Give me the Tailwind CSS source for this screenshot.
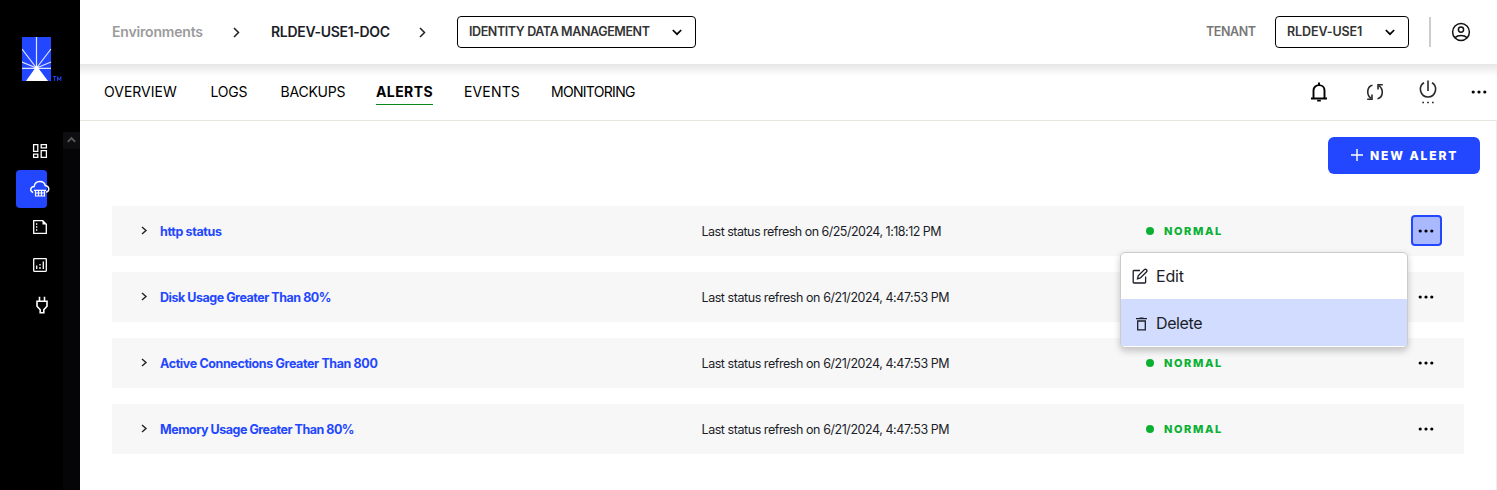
<!DOCTYPE html>
<html lang="en">
<head>
<meta charset="utf-8">
<title>Alerts</title>
<script src="https://cdn.jsdelivr.net/npm/@tailwindcss/browser@4"></script>
</head>
<body class="bg-white font-['Inter',sans-serif] text-black">
<svg class="hidden">
  <symbol id="dots" viewBox="0 0 16 4"><circle cx="2.200" cy="2" r="1.600"/><circle cx="8" cy="2" r="1.600"/><circle cx="13.800" cy="2" r="1.600"/></symbol>
  <symbol id="caret" viewBox="0 0 7 9"><path d="M1 1L5 4.500L1 8" fill="none" stroke="#222" stroke-width="1.400"/></symbol>
  <symbol id="crumb" viewBox="0 0 7 11"><path d="M1 1L5.500 5.500L1 10" fill="none" stroke="#222" stroke-width="1.500"/></symbol>
  <symbol id="down" viewBox="0 0 10 7"><path d="M.8 1L5 5.200L9.200 1" fill="none" stroke="#000" stroke-width="1.700"/></symbol>
</svg>
<div class="flex h-[490px] w-[1497px] overflow-hidden">
  <!-- Sidebar -->
  <aside class="flex w-20 shrink-0 flex-col bg-black">
    <div class="flex h-[132px] items-start pt-[37px] pl-[22px]">
      <svg width="42" height="45" viewBox="0 0 42 45" fill="none">
        <rect width="29" height="44" fill="#2347ff"/>
        <path d="M14.5 31V0M14.5 31L0 12M14.5 31L29 12M14.5 31L0 25M14.5 31L29 25M0 31.3H29" stroke="#dfe4ff" stroke-width="1.2"/>
        <path d="M14.5 28L17 32L26 44H4L12.500 32Z" fill="#fff"/>
        <path d="M31 39.500H34.300M32.600 39.500V44M35.500 44V39.700L37.200 43L38.900 39.700V44" stroke="#2347ff" stroke-width=".9"/>
      </svg>
    </div>
    <div class="flex flex-1">
      <nav class="flex w-[63px] flex-col pl-4 text-white">
        <div class="flex h-[38px] items-center pl-4">
          <svg width="16" height="16" viewBox="0 0 16 16" fill="none" stroke="currentColor" stroke-width="1.300"><path d="M1.600 1.600H5.800V8.400H1.600ZM9.200 1.600H14.400V4.800H9.200ZM1.600 11.200H5.800V14.400H1.600ZM9.200 7.600H14.400V14.400H9.200Z"/></svg>
        </div>
        <div class="flex h-[38px] w-[31px] items-center rounded bg-[#2347ff] pl-3.5">
          <svg class="shrink-0 overflow-visible" width="20" height="18" viewBox="0 0 20 18" fill="none" stroke="currentColor" stroke-width="1.400"><path d="M3.200 12.500C-.4 11.300 0 6.800 4.200 6.500C5 0 14 0 15.200 5.500C19.600 6 20 11.200 16.200 12.200"/><path d="M4 10.300H16M5.500 10.300V16H14.500V10.300M8.500 10.300V16M11.500 10.300V16M5 13H15" stroke-width="1.200"/></svg>
        </div>
        <div class="flex h-[38px] items-center pl-4">
          <svg width="16" height="16" viewBox="0 0 16 16" fill="none" stroke="currentColor" stroke-width="1.300"><path d="M1.700 1.700H10.800L14.300 5.200V14.300H1.700Z"/><path d="M10.500 1.500V5.500H14.500Z" fill="currentColor" stroke="none"/><path d="M4 5H5.300M4 8H5.300M4 11H5.300"/></svg>
        </div>
        <div class="flex h-[38px] items-center pl-4">
          <svg width="16" height="16" viewBox="0 0 16 16" fill="none" stroke="currentColor" stroke-width="1.300"><rect x="1.700" y="1.700" width="12.600" height="12.600" rx=".5"/><path d="M4.700 8.500V12M8 10V12M8 7V8.500M11.300 4.500V12"/></svg>
        </div>
        <div class="flex h-[41px] items-center pl-[19px]">
          <svg width="14" height="18" viewBox="0 0 14 18" fill="none" stroke="currentColor" stroke-width="1.600"><path d="M4.500 .8V5M9.500 .8V5M2 5.300H12V10.300L8.800 13.800V16.800H5.200V13.800L2 10.300Z"/></svg>
        </div>
      </nav>
      <div class="flex flex-1 flex-col bg-[#050507]">
        <div class="flex h-[17px] items-center justify-center bg-[#0e0e10]">
          <svg width="9" height="9" viewBox="0 0 9 9" fill="none" stroke="#5c5c5c" stroke-width="1.800"><path d="M.8 5.800L4.500 2L8.200 5.800"/></svg>
        </div>
      </div>
    </div>
  </aside>

  <div class="flex min-w-0 flex-1 flex-col">
    <!-- Breadcrumb bar -->
    <header class="flex h-16 shrink-0 items-center justify-between pl-8 pr-[26px] text-sm font-semibold">
      <div class="flex items-center">
        <span class="w-[121px] whitespace-nowrap tracking-[-0.18px] text-[#9b9b9b]">Environments</span>
        <svg class="mr-[31px] shrink-0" width="7" height="11"><use href="#crumb"/></svg>
        <span class="w-[148px] whitespace-nowrap tracking-[-0.31px] text-[#1b1d29]">RLDEV-USE1-DOC</span>
        <svg class="mr-[31px] shrink-0" width="7" height="11"><use href="#crumb"/></svg>
        <div class="flex h-8 w-[239px] items-center justify-between rounded border border-black pl-[11px] pr-[13px] text-[12.5px] text-[#333]">
          <span class="whitespace-nowrap tracking-[-0.4px]">IDENTITY DATA MANAGEMENT</span>
          <svg class="shrink-0" width="10" height="7"><use href="#down"/></svg>
        </div>
      </div>
      <div class="flex items-center">
        <span class="w-[69px] whitespace-nowrap text-[12.5px] tracking-[-0.43px] text-[#777]">TENANT</span>
        <div class="flex h-8 w-[134px] items-center justify-between rounded border border-black pl-[11px] pr-[13px] text-[12.5px] text-[#333]">
          <span class="whitespace-nowrap tracking-[-0.1px]">RLDEV-USE1</span>
          <svg class="shrink-0" width="10" height="7"><use href="#down"/></svg>
        </div>
        <div class="ml-5 h-[30px] w-0.5 bg-[#ccc]"></div>
        <svg class="ml-5 shrink-0" width="20" height="20" viewBox="0 0 20 20" fill="none" stroke="#111" stroke-width="1.500"><circle cx="10" cy="10" r="8.400"/><circle cx="10" cy="7.600" r="2.600"/><path d="M4 15.600C7 12.900 13 12.900 16 15.600"/></svg>
      </div>
    </header>

    <!-- Tabs -->
    <div class="flex h-[57px] shrink-0 items-center justify-between border-b border-[#e6e6de] bg-linear-to-b from-[#e6e6e6] to-white to-[12px] pl-6 pr-2.5 text-sm">
      <nav class="flex pt-0.5">
        <span class="w-[106.500px] whitespace-nowrap">OVERVIEW</span>
        <span class="w-[70px] whitespace-nowrap tracking-[-0.22px]">LOGS</span>
        <span class="w-[95.500px] whitespace-nowrap tracking-[-0.22px]">BACKUPS</span>
        <span class="mr-[31px] w-[57px] whitespace-nowrap border-b border-[#078a1b] pb-0.5 font-bold tracking-[0.4px]">ALERTS</span>
        <span class="w-[87px] whitespace-nowrap tracking-[0.15px]">EVENTS</span>
        <span class="whitespace-nowrap tracking-[-0.7px]">MONITORING</span>
      </nav>
      <div class="flex items-center">
        <svg width="18" height="20" viewBox="0 0 18 20" fill="none" stroke="#000" stroke-width="1.900"><path d="M1 16.500H17M3.500 16.500V8.500C3.500 1.300 14.500 1.300 14.500 8.500V16.500"/><path d="M9 3.500V.6M7.200 18.600H10.800"/></svg>
        <svg class="ml-[38px]" width="18" height="18" viewBox="0 0 18 18" fill="none" stroke="#2a2a2a" stroke-width="1.600"><path d="M6.500 2.200C.8 3.500 .2 11.500 4.800 15.200M1.200 16.200H6V11.500M11.500 15.800C17.200 14.500 17.800 6.500 13.200 2.800M16.800 1.800H12V6.500"/></svg>
        <svg class="ml-[35px]" width="18" height="25" viewBox="0 0 18 25" fill="none" stroke="#2a2a2a" stroke-width="1.600"><path d="M9 .5V11M5 2.700C-1.200 6.500 1.100 17 9 17C16.900 17 19.200 6.500 13 2.700"/><path d="M3.300 22.500H5M8.150 22.500H9.850M13 22.500H14.700"/></svg>
        <svg class="ml-[34px]" width="16" height="4"><use href="#dots"/></svg>
      </div>
    </div>

    <!-- Alerts list -->
    <main class="relative flex flex-1 flex-col border-r border-[#ececec] pl-8 pr-4">
      <button class="mt-4 flex h-[37px] w-[152px] shrink-0 items-center self-end rounded-md bg-[#2347ff] pl-[23px] text-xs font-extrabold text-white">
        <svg class="mr-[7px] mb-px shrink-0" width="12" height="12" viewBox="0 0 12 12" fill="none" stroke="#fff" stroke-width="1.400"><path d="M6 0V12M0 6H12"/></svg>
        <span class="whitespace-nowrap tracking-[1.9px]">NEW ALERT</span>
      </button>
      <div class="mt-8 flex w-[1352px] flex-col gap-4 text-[12.5px]">
        <div class="flex h-[50px] items-center bg-[#f7f7f7] pl-[29px]">
          <svg class="mr-3 mb-px shrink-0" width="7" height="9"><use href="#caret"/></svg>
          <span class="w-[541.500px] whitespace-nowrap pt-0.5 font-bold tracking-[-0.36px] text-[#2347ff]">http status</span>
          <span class="w-[444.500px] whitespace-nowrap pt-0.5 tracking-[-0.51px] text-[#1b1d29]">Last status refresh on 6/25/2024, 1:18:12 PM</span>
          <span class="mr-2.5 size-2 rounded-full bg-[#0bb033]"></span>
          <span class="w-[247px] whitespace-nowrap text-[11px] font-extrabold tracking-[1.6px] text-[#0bb033]">NORMAL</span>
          <span class="mb-px flex size-[31px] items-center justify-center rounded border-2 border-[#2347ff] bg-[#a9b8ff]"><svg class="mr-px" width="16" height="4"><use href="#dots"/></svg></span>
        </div>
        <div class="flex h-[50px] items-center bg-[#f7f7f7] pl-[29px]">
          <svg class="mr-3 mb-px shrink-0" width="7" height="9"><use href="#caret"/></svg>
          <span class="w-[541.500px] whitespace-nowrap pt-0.5 font-bold tracking-[-0.47px] text-[#2347ff]">Disk Usage Greater Than 80%</span>
          <span class="w-[444.500px] whitespace-nowrap pt-0.5 tracking-[-0.44px] text-[#1b1d29]">Last status refresh on 6/21/2024, 4:47:53 PM</span>
          <span class="mr-2.5 size-2 rounded-full bg-[#0bb033]"></span>
          <span class="w-[246px] whitespace-nowrap text-[11px] font-extrabold tracking-[1.6px] text-[#0bb033]">NORMAL</span>
          <span class="mb-px flex size-[31px] items-center justify-center"><svg width="16" height="4"><use href="#dots"/></svg></span>
        </div>
        <div class="flex h-[50px] items-center bg-[#f7f7f7] pl-[29px]">
          <svg class="mr-3 mb-px shrink-0" width="7" height="9"><use href="#caret"/></svg>
          <span class="w-[541.500px] whitespace-nowrap pt-0.5 font-bold tracking-[-0.38px] text-[#2347ff]">Active Connections Greater Than 800</span>
          <span class="w-[444.500px] whitespace-nowrap pt-0.5 tracking-[-0.44px] text-[#1b1d29]">Last status refresh on 6/21/2024, 4:47:53 PM</span>
          <span class="mr-2.5 size-2 rounded-full bg-[#0bb033]"></span>
          <span class="w-[246px] whitespace-nowrap text-[11px] font-extrabold tracking-[1.6px] text-[#0bb033]">NORMAL</span>
          <span class="mb-px flex size-[31px] items-center justify-center"><svg width="16" height="4"><use href="#dots"/></svg></span>
        </div>
        <div class="flex h-[50px] items-center bg-[#f7f7f7] pl-[29px]">
          <svg class="mr-3 mb-px shrink-0" width="7" height="9"><use href="#caret"/></svg>
          <span class="w-[541.500px] whitespace-nowrap pt-0.5 font-bold tracking-[-0.48px] text-[#2347ff]">Memory Usage Greater Than 80%</span>
          <span class="w-[444.500px] whitespace-nowrap pt-0.5 tracking-[-0.44px] text-[#1b1d29]">Last status refresh on 6/21/2024, 4:47:53 PM</span>
          <span class="mr-2.5 size-2 rounded-full bg-[#0bb033]"></span>
          <span class="w-[246px] whitespace-nowrap text-[11px] font-extrabold tracking-[1.6px] text-[#0bb033]">NORMAL</span>
          <span class="mb-px flex size-[31px] items-center justify-center"><svg width="16" height="4"><use href="#dots"/></svg></span>
        </div>
      </div>

      <!-- Row menu -->
      <div class="absolute top-[131px] left-[1040px] flex h-24 w-[288px] flex-col overflow-hidden rounded-[5px] border border-[#ccc] bg-white text-base text-[#1b1d29] shadow-[0_3px_7px_rgba(0,0,0,0.22)]">
        <div class="flex h-[46px] items-center pl-[11px]">
          <svg class="mr-[7px] shrink-0" width="17" height="17" viewBox="0 0 17 17" fill="none" stroke="#1b1d29" stroke-width="1.300"><path d="M8 2.500H2Q1.200 2.500 1.200 3.300V14.200Q1.200 15 2 15H12.800Q13.600 15 13.600 14.200V8.500"/><path d="M5.500 10.800L6.200 7.800L12.500 1.600Q13.500 .8 14.500 1.800Q15.400 2.800 14.600 3.800L8.400 10Z"/></svg>
          <span class="whitespace-nowrap tracking-[-0.2px]">Edit</span>
        </div>
        <div class="flex h-[47px] items-center bg-[#d2dcff] pl-[15px]">
          <svg class="mt-0.5 mr-[9px] shrink-0" width="11" height="14" viewBox="0 0 11 14" fill="none" stroke="#1b1d29" stroke-width="1.300"><path d="M0 1.700H11M3.500 1.200H7.500M1.700 4V12.800H9.300V4Z"/></svg>
          <span class="whitespace-nowrap tracking-[-0.4px]">Delete</span>
        </div>
      </div>
    </main>
  </div>
</div>
</body>
</html>
